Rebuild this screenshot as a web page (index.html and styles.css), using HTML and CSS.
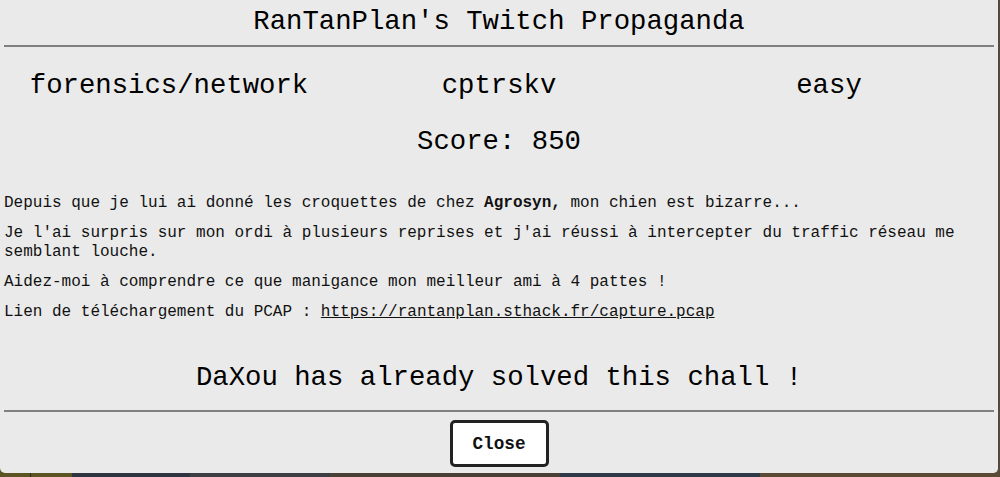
FILE: index.html
```html
<!DOCTYPE html>
<html lang="fr">
<head>
    <meta charset="UTF-8">
    <meta name="viewport" content="width=device-width, initial-scale=1.0">
    <title>RanTanPlan's Twitch Propaganda</title>
    <link rel="stylesheet" href="styles.css">
</head>
<body>
    <div class="modal">
        <h2 class="modal-title">RanTanPlan's Twitch Propaganda</h2>
        <hr class="divider">

        <!-- category / author / difficulty -->
        <div class="chall-info">
            <span>forensics/network</span>
            <span>cptrskv</span>
            <span>easy</span>
        </div>
        <div class="chall-score">Score: 850</div>

        <div class="chall-desc">
            <p>Depuis que je lui ai donné les croquettes de chez <strong>Agrosyn,</strong> mon chien est bizarre...</p>
            <p>Je l'ai surpris sur mon ordi à plusieurs reprises et j'ai réussi à intercepter du traffic réseau me semblant louche.</p>
            <p>Aidez-moi à comprendre ce que manigance mon meilleur ami à 4 pattes !</p>
            <p>Lien de téléchargement du PCAP : <a href="#">https://rantanplan.sthack.fr/capture.pcap</a></p>
        </div>

        <div class="chall-solved">DaXou has already solved this chall !</div>
        <hr class="divider divider-bottom">

        <div class="modal-footer">
            <button type="button" class="btn-close">Close</button>
        </div>
    </div>
</body>
</html>
```

FILE: styles.css
```css
html, body {
    height: 100%;
}
body {
    margin: 0;
    padding: 0;
    font-family: 'Liberation Mono', 'DejaVu Sans Mono', monospace;
    color: #000;
    background: linear-gradient(to right,
        #5b5321 0 30px, #2a2a22 30px 31px, #5b5321 31px 72px,
        #2e3540 72px 190px, #3b3f44 190px 330px, #4a4036 330px 560px,
        #2f3a48 560px 760px, #5a4a34 760px 1000px);
}
.modal {
    width: 990px;
    padding: 4px 4px 6px;
    background-color: #eaeaea;
    border-right: 1px solid #4a4a4a;
    border-radius: 0 0 5px 5px;
}
.modal-title {
    margin: 0;
    font-size: 27.3px;
    font-weight: normal;
    line-height: 36px;
    text-align: center;
}
.divider {
    margin: 5px 0 0;
    height: 2px;
    border: none;
    background-color: #808080;
}
.chall-info {
    display: grid;
    grid-template-columns: 1fr 1fr 1fr;
    margin-top: 21px;
    font-size: 27.3px;
    line-height: 36px;
    text-align: center;
}
.chall-score {
    margin-top: 20px;
    font-size: 27.3px;
    line-height: 36px;
    text-align: center;
}
.chall-desc {
    margin-top: 34px;
    font-size: 16px;
    line-height: 19px;
    color: #111;
}
.chall-desc p {
    margin: 0 0 11px;
}
.chall-desc p:last-child {
    margin-bottom: 0;
}
.chall-desc a {
    color: #111;
    text-decoration: underline;
}
.chall-solved {
    margin-top: 38px;
    font-size: 27.3px;
    line-height: 36px;
    text-align: center;
}
.divider-bottom {
    margin-top: 14px;
}
.modal-footer {
    display: flex;
    justify-content: center;
    margin-top: 8px;
}
.btn-close {
    width: 99px;
    height: 47px;
    padding: 0;
    font-family: inherit;
    font-size: 17.7px;
    font-weight: bold;
    color: #111;
    background-color: #fff;
    border: 3px solid #222;
    border-radius: 5px;
    cursor: pointer;
}
```
